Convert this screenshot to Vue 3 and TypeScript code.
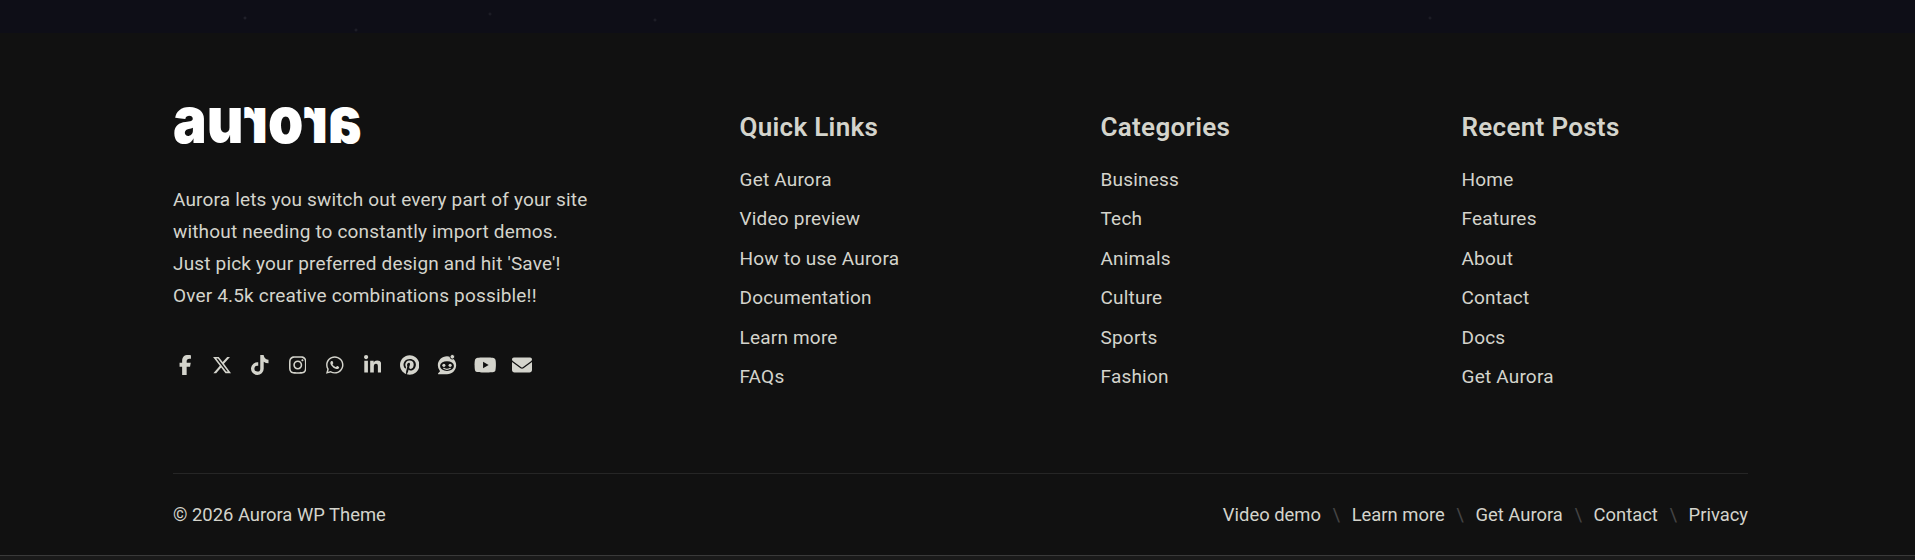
<template>
  <div class="page">
    <div class="top-strip"></div>
    <footer class="footer">
      <div class="main-row">
        <div class="about">
          <div class="logo" aria-label="aurora">
            <span>a</span><span>u</span><span class="flip">r</span><span>o</span><span class="flip">r</span><span class="flip">a</span>
          </div>
          <p class="blurb">
            Aurora lets you switch out every part of your site<br />
            without needing to constantly import demos.<br />
            Just pick your preferred design and hit 'Save'!<br />
            Over 4.5k creative combinations possible!!
          </p>
          <div class="socials">
            <a v-for="icon in socials" :key="icon.name" class="social" :title="icon.name">
              <svg v-if="icon.name === 'reddit'" viewBox="0 0 24 24" width="22" height="22">
                <path fill="currentColor" d="M12 2.400c5.400 0 10 4.200 10 9.800s-4.600 9.800-10 9.800H2.900c-.6 0-.9-.7-.5-1.100l2-2.200A9.700 9.700 0 0 1 2 12.200C2 6.600 6.600 2.400 12 2.400z" />
                <circle cx="17.800" cy="3" r="2.500" fill="currentColor" stroke="#111" stroke-width="1" />
                <ellipse cx="12" cy="13.200" rx="7.600" ry="5.400" fill="#111" />
                <circle cx="8.600" cy="12.400" r="1.700" fill="currentColor" />
                <circle cx="15.400" cy="12.400" r="1.700" fill="currentColor" />
                <path d="M8.400 15.600c2.200 1.400 5 1.400 7.200 0" fill="none" stroke="currentColor" stroke-width="1.300" stroke-linecap="round" />
              </svg>
              <svg v-else :viewBox="icon.box" :width="icon.width" height="20" fill="currentColor">
                <path :d="icon.d" />
              </svg>
            </a>
          </div>
        </div>
        <div v-for="col in columns" :key="col.title" class="link-col">
          <h3>{{ col.title }}</h3>
          <ul>
            <li v-for="link in col.links" :key="link">{{ link }}</li>
          </ul>
        </div>
      </div>
      <div class="bottom-row">
        <span>© 2026 Aurora WP Theme</span>
        <nav class="bottom-nav">
          <template v-for="(item, i) in bottomLinks" :key="item">
            <i v-if="i > 0" class="sep">\</i>
            <a>{{ item }}</a>
          </template>
        </nav>
      </div>
    </footer>
    <div class="next-section"></div>
  </div>
</template>

<script setup lang="ts">
interface SocialIcon {
  name: string;
  box: string;
  width: number;
  d: string;
}

interface LinkColumn {
  title: string;
  links: string[];
}

const socials: SocialIcon[] = [
  { name: 'facebook', box: '0 0 320 512', width: 12.5, d: 'M80 299.3V512H196V299.3h86.5l18-97.8H196V166.9c0-51.7 20.3-71.5 72.7-71.5c16.3 0 29.4 .4 37 1.2V7.9C291.4 4 256.4 0 236.2 0C129.3 0 80 50.5 80 159.4v42.1H14v97.8H80z' },
  { name: 'x', box: '0 0 512 512', width: 20, d: 'M389.2 48h70.6L305.6 224.2 487 464H345L233.7 318.6 106.5 464H35.8L200.7 275.5 26.8 48H172.4L272.9 180.9 389.2 48zM364.4 421.8h39.1L151.1 88h-42L364.4 421.800z' },
  { name: 'tiktok', box: '0 0 448 512', width: 17.5, d: 'M448,209.91a210.06,210.06,0,0,1-122.77-39.25V349.38A162.55,162.55,0,1,1,185,188.31V278.2a74.62,74.62,0,1,0,52.23,71.18V0l88,0a121.18,121.18,0,0,0,1.86,22.17h0A122.18,122.18,0,0,0,381,102.39a121.43,121.43,0,0,0,67,20.14Z' },
  { name: 'instagram', box: '0 0 448 512', width: 17.5, d: 'M224.1 141c-63.6 0-114.9 51.3-114.9 114.9s51.3 114.9 114.9 114.9S339 319.5 339 255.9 287.7 141 224.1 141zm0 189.6c-41.1 0-74.7-33.5-74.7-74.7s33.5-74.7 74.7-74.7 74.7 33.5 74.7 74.7-33.6 74.7-74.7 74.7zm146.4-194.3c0 14.9-12 26.8-26.8 26.8-14.9 0-26.8-12-26.8-26.8s12-26.8 26.8-26.8 26.8 12 26.8 26.8zm76.1 27.2c-1.7-35.9-9.9-67.7-36.2-93.9-26.2-26.2-58-34.4-93.9-36.2-37-2.1-147.9-2.1-184.9 0-35.8 1.7-67.6 9.9-93.9 36.1s-34.4 58-36.2 93.9c-2.1 37-2.1 147.9 0 184.9 1.7 35.9 9.9 67.7 36.2 93.9s58 34.4 93.9 36.2c37 2.1 147.9 2.1 184.9 0 35.9-1.7 67.7-9.9 93.9-36.2 26.2-26.2 34.4-58 36.2-93.9 2.1-37 2.1-147.8 0-184.8zM398.8 388c-7.8 19.6-22.9 34.7-42.6 42.6-29.5 11.7-99.5 9-132.1 9s-102.7 2.6-132.1-9c-19.6-7.8-34.7-22.9-42.6-42.6-11.7-29.5-9-99.5-9-132.1s-2.6-102.7 9-132.1c7.8-19.6 22.9-34.7 42.6-42.6 29.5-11.7 99.5-9 132.1-9s102.7-2.6 132.1 9c19.6 7.8 34.7 22.9 42.6 42.6 11.7 29.5 9 99.5 9 132.1s2.7 102.7-9 132.1z' },
  { name: 'whatsapp', box: '0 0 448 512', width: 17.5, d: 'M380.9 97.1C339 55.1 283.2 32 223.9 32c-122.4 0-222 99.6-222 222 0 39.1 10.2 77.3 29.6 111L0 480l117.7-30.9c32.4 17.7 68.9 27 106.1 27h.1c122.3 0 224.1-99.6 224.1-222 0-59.3-25.2-115-67.1-157zm-157 341.6c-33.2 0-65.7-8.9-94-25.7l-6.7-4-69.8 18.3L72 359.2l-4.4-7c-18.5-29.4-28.2-63.3-28.2-98.2 0-101.7 82.8-184.5 184.6-184.5 49.3 0 95.6 19.2 130.4 54.1 34.8 34.9 56.2 81.2 56.1 130.5 0 101.8-84.9 184.6-186.6 184.6zm101.2-138.2c-5.5-2.8-32.8-16.2-37.9-18-5.1-1.9-8.8-2.8-12.5 2.8-3.7 5.6-14.3 18-17.6 21.8-3.2 3.7-6.5 4.2-12 1.4-32.6-16.3-54-29.1-75.5-66-5.7-9.8 5.7-9.1 16.3-30.3 1.8-3.7 .9-6.9-.5-9.7-1.4-2.8-12.5-30.1-17.1-41.2-4.5-10.8-9.1-9.3-12.5-9.5-3.2-.2-6.9-.2-10.6-.2-3.7 0-9.7 1.4-14.8 6.9-5.1 5.6-19.4 19-19.4 46.3 0 27.3 19.9 53.7 22.6 57.4 2.8 3.7 39.1 59.7 94.8 83.8 35.2 15.2 49 16.5 66.6 13.9 10.7-1.6 32.8-13.4 37.4-26.4 4.6-13 4.6-24.1 3.2-26.4-1.3-2.5-5-3.9-10.5-6.6z' },
  { name: 'linkedin', box: '0 0 448 512', width: 17.5, d: 'M100.28 448H7.4V148.9h92.88zM53.79 108.1C24.09 108.1 0 83.5 0 53.8a53.79 53.79 0 0 1 107.58 0c0 29.7-24.1 54.3-53.79 54.3zM447.9 448h-92.68V302.4c0-34.7-.7-79.2-48.29-79.2-48.29 0-55.69 37.7-55.69 76.7V448h-92.78V148.9h89.08v40.8h1.3c12.4-23.5 42.69-48.3 87.88-48.3 94 0 111.28 61.9 111.28 142.3V448z' },
  { name: 'pinterest', box: '0 0 496 512', width: 19.4, d: 'M496 256c0 137-111 248-248 248-25.6 0-50.2-3.9-73.4-11.1 10.1-16.5 25.2-43.5 30.8-65 3-11.6 15.4-59 15.4-59 8.1 15.4 31.7 28.5 56.8 28.5 74.8 0 128.7-68.8 128.7-154.3 0-81.9-66.9-143.2-152.9-143.2-107 0-163.9 71.8-163.9 150.1 0 36.4 19.4 81.7 50.3 96.1 4.7 2.2 7.2 1.2 8.3-3.3 .8-3.4 5-20.3 6.9-28.1 .6-2.5 .3-4.7-1.7-7.1-10.1-12.5-18.3-35.3-18.3-56.6 0-54.7 41.4-107.6 112-107.6 60.9 0 103.6 41.5 103.6 100.9 0 67.1-33.9 113.6-78 113.6-24.3 0-42.6-20.1-36.7-44.8 7-29.5 20.5-61.3 20.5-82.6 0-19-10.2-34.9-31.4-34.9-24.9 0-44.9 25.7-44.9 60.2 0 22 7.4 36.8 7.4 36.8s-24.5 103.8-29 123.2c-5 21.4-3 51.6-.9 71.2C65.4 450.9 0 361.1 0 256 0 119 111 8 248 8s248 111 248 248z' },
  { name: 'reddit', box: '', width: 22, d: '' },
  { name: 'youtube', box: '0 0 576 512', width: 22.5, d: 'M549.655 124.083c-6.281-23.65-24.787-42.276-48.284-48.597C458.781 64 288 64 288 64S117.22 64 74.629 75.486c-23.497 6.322-42.003 24.947-48.284 48.597-11.412 42.867-11.412 132.305-11.412 132.305s0 89.438 11.412 132.305c6.281 23.65 24.787 41.5 48.284 47.821C117.22 448 288 448 288 448s170.78 0 213.371-11.486c23.497-6.321 42.003-24.171 48.284-47.821 11.412-42.867 11.412-132.305 11.412-132.305s0-89.438-11.412-132.305zm-317.51 213.508V175.185l142.739 81.205-142.739 81.201z' },
  { name: 'email', box: '0 0 512 512', width: 20, d: 'M48 64C21.5 64 0 85.5 0 112c0 15.1 7.1 29.3 19.2 38.4L236.8 313.6c11.4 8.5 27 8.5 38.4 0L492.8 150.4c12.1-9.1 19.2-23.3 19.2-38.4c0-26.5-21.5-48-48-48H48zM0 176V384c0 35.3 28.7 64 64 64H448c35.3 0 64-28.7 64-64V176L294.4 339.2c-22.8 17.1-53.9 17.1-76.8 0L0 176z' },
];

const columns: LinkColumn[] = [
  { title: 'Quick Links', links: ['Get Aurora', 'Video preview', 'How to use Aurora', 'Documentation', 'Learn more', 'FAQs'] },
  { title: 'Categories', links: ['Business', 'Tech', 'Animals', 'Culture', 'Sports', 'Fashion'] },
  { title: 'Recent Posts', links: ['Home', 'Features', 'About', 'Contact', 'Docs', 'Get Aurora'] },
];

const bottomLinks = ['Video demo', 'Learn more', 'Get Aurora', 'Contact', 'Privacy'];
</script>

<style>
html,
body {
  margin: 0;
  background: #111;
}
</style>

<style scoped>
.page {
  height: 560px;
  overflow: hidden;
  display: flex;
  flex-direction: column;
  font-family: Roboto, "Liberation Sans", sans-serif;
  color: #d4d4cc;
}
.top-strip {
  height: 33px;
  flex-shrink: 0;
  background:
    radial-gradient(circle at 245px 18px, #2a2a34 0, transparent 2px),
    radial-gradient(circle at 356px 30px, #26262f 0, transparent 2px),
    radial-gradient(circle at 490px 14px, #24242d 0, transparent 2px),
    radial-gradient(circle at 655px 20px, #26262f 0, transparent 2px),
    radial-gradient(circle at 1430px 18px, #24242d 0, transparent 2px),
    #0e0e17;
}
.footer {
  height: 522px;
  flex-shrink: 0;
  padding: 0 167px 0 173px;
  box-sizing: border-box;
  background: #111;
}
.main-row {
  display: grid;
  grid-template-columns: 566.5px 361px 361px 1fr;
  height: 441px;
  padding-top: 75px;
  box-sizing: border-box;
  border-bottom: 1px solid #262626;
}
.logo {
  display: flex;
  align-items: flex-start;
  height: 36px;
  font-family: Inter, sans-serif;
  font-weight: 900;
  font-size: 65px;
  line-height: 24px;
  color: #fff;
  transform: scaleX(0.87);
  transform-origin: left center;
}
.flip {
  display: inline-block;
  transform: scaleX(-1);
}
.blurb {
  margin: 40px 0 0;
  font-size: 19px;
  line-height: 32px;
  letter-spacing: 0.17px;
}
.socials {
  display: flex;
  margin-top: 41px;
  margin-left: -7px;
}
.social {
  width: 37.5px;
  height: 24px;
  display: flex;
  align-items: center;
  justify-content: center;
}
.link-col h3 {
  margin: 0;
  font-size: 26px;
  line-height: 38px;
  font-weight: 600;
  letter-spacing: 0.3px;
}
.link-col ul {
  margin: 14px 0 0;
  padding: 0;
  list-style: none;
}
.link-col li {
  font-size: 19px;
  line-height: 39.4px;
  letter-spacing: 0.2px;
}
.bottom-row {
  display: flex;
  justify-content: space-between;
  align-items: center;
  height: 80px;
  font-size: 18.4px;
}
.bottom-nav {
  display: flex;
  align-items: center;
}
.sep {
  margin: 0 11.6px;
  font-style: normal;
  color: #444;
}
.next-section {
  flex: 1;
  background: #1a1a1a;
  border-top: 1px solid #3a3a3a;
}
</style>
